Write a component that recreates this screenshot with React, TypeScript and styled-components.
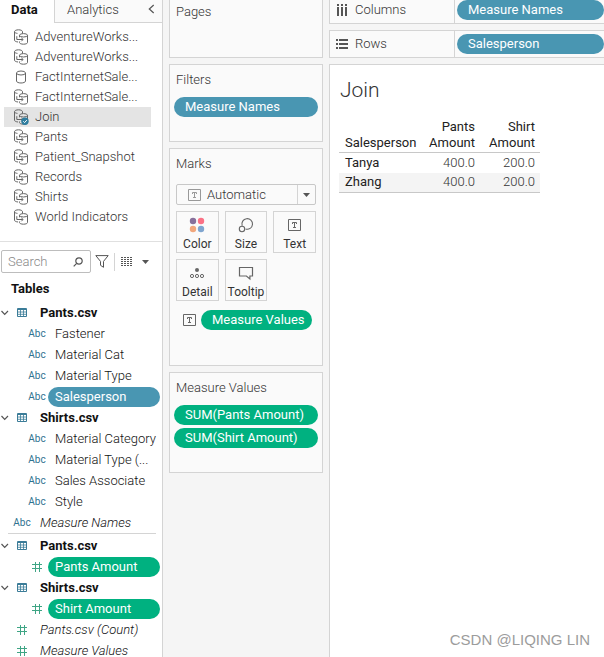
import React from 'react';
import styled, { createGlobalStyle, css } from 'styled-components';

const BLUE = '#4996b2';
const GREEN = '#00b180';
const LINE = '#d4d4d4';

const GlobalStyle = createGlobalStyle`
  *, *::before, *::after { box-sizing: border-box; }
  body {
    margin: 0;
    background: #f5f5f5;
    color: #333;
    font: 300 13px/20px Roboto, "Liberation Sans", sans-serif;
  }
  button, input { font: inherit; color: inherit; }
  button { border: 0; padding: 0; background: none; text-align: left; cursor: pointer; }
  svg { display: block; flex: none; }
  ul { list-style: none; margin: 0; padding: 0; }
  h1, h2 { margin: 0; font-weight: 300; }
`;

const Page = styled.div`
  display: grid;
  grid-template-columns: 163px 154px minmax(0, 1fr);
  column-gap: 6px;
  height: 100vh;
  overflow: hidden;
`;

/* ---------- data pane ---------- */

const DataPane = styled.aside`
  background: #fff;
  border-right: 1px solid ${LINE};
  overflow: hidden;
`;

const TabBar = styled.div`
  display: flex;
  height: 23px;
`;

const Tab = styled.button<{ $active?: boolean }>`
  padding-bottom: 3px;
  ${p => p.$active
    ? css`width: 54px; padding-left: 11px; font-weight: 700; color: #111;`
    : css`flex: 1; padding-left: 12px; background: #fafafa; border-left: 1px solid ${LINE}; border-bottom: 1px solid ${LINE};`}
`;

const Collapse = styled.button`
  width: 20px;
  padding: 0 0 4px 6px;
  background: #fafafa;
  border-bottom: 1px solid ${LINE};
`;

const SourceList = styled.ul`
  padding: 4px 11px 14px 4px;
  border-bottom: 1px solid #e0e0e0;
`;

const Source = styled.button<{ $selected?: boolean }>`
  display: flex;
  align-items: center;
  gap: 6px;
  width: 100%;
  height: 20px;
  padding-left: 9px;
  white-space: nowrap;
  background: ${p => (p.$selected ? '#e4e4e4' : 'transparent')};
`;

const SearchRow = styled.div`
  display: flex;
  align-items: center;
  padding: 8px 0 0 1px;
`;

const SearchBox = styled.label`
  display: flex;
  align-items: center;
  width: 90px;
  height: 23px;
  padding: 0 7px 0 6px;
  border: 1px solid #bdbdbd;
  border-radius: 2px;
`;

const SearchInput = styled.input`
  flex: 1;
  min-width: 0;
  padding: 0;
  border: 0;
  outline: 0;
  background: none;
  &::placeholder { color: #888; opacity: 1; }
`;

const FilterButton = styled.button`
  padding: 0 5px 0 4px;
`;

const ViewButton = styled.button`
  display: flex;
  align-items: center;
  gap: 9px;
  height: 18px;
  padding-left: 6px;
  border-left: 1px solid ${LINE};
`;

const TablesTitle = styled.h2`
  padding: 6px 0 3px 11px;
  font-size: 13px;
  font-weight: 700;
  color: #111;
`;

const Tree = styled.ul`
  padding: 0 2px 0 0;
`;

const TableRow = styled.button`
  display: flex;
  align-items: center;
  height: 21px;
  width: 100%;
  font-weight: 700;
  color: #111;
  & > svg:first-child { margin-right: 8px; }
  & > svg:nth-child(2) { margin-right: 13px; }
`;

const FieldRow = styled.li<{ $outer?: boolean }>`
  display: flex;
  align-items: center;
  height: 21px;
  padding-left: ${p => (p.$outer ? 12 : 27)}px;
  color: #111;
`;

const TypeMark = styled.span`
  display: flex;
  justify-content: center;
  width: 20px;
  font-size: 10px;
  font-weight: 400;
  color: #2f7290;
`;

const FieldName = styled.button<{ $italic?: boolean }>`
  margin-left: 8px;
  white-space: nowrap;
  font-style: ${p => (p.$italic ? 'italic' : 'normal')};
`;

const Divider = styled.li`
  height: 1px;
  margin: 0 4px 1px 8px;
  background: ${LINE};
`;

const Pill = styled.button<{ $color: string; $pad?: number }>`
  display: block;
  flex: 1;
  width: 100%;
  height: 20px;
  padding-left: ${p => p.$pad ?? 11}px;
  border-radius: 10px;
  background: ${p => p.$color};
  color: #fff;
  font-weight: 400;
  white-space: nowrap;
`;

/* ---------- cards ---------- */

const Cards = styled.section`
  display: flex;
  flex-direction: column;
  gap: 6px;
`;

const Card = styled.div<{ $min: number; $first?: boolean }>`
  min-height: ${p => p.$min}px;
  padding: ${p => (p.$first ? 2 : 5)}px 4px 8px;
  background: #fafafa;
  border: 1px solid ${LINE};
  ${p => p.$first && css`border-top: 0;`}
`;

const CardTitle = styled.h2`
  padding-left: 2px;
  font-size: 13px;
`;

const PillStack = styled.div`
  display: grid;
  gap: 3px;
  margin-top: 7px;
`;

const MarkType = styled.button`
  display: flex;
  align-items: center;
  width: 140px;
  height: 21px;
  margin: 10px 0 6px 2px;
  padding-left: 11px;
  gap: 6px;
  border: 1px solid #c8c8c8;
  border-radius: 2px;
`;

const Caret = styled.span`
  display: flex;
  align-items: center;
  justify-content: center;
  width: 18px;
  height: 100%;
  margin-left: auto;
  border-left: 1px solid ${LINE};
`;

const MarkGrid = styled.div`
  display: grid;
  grid-template-columns: repeat(3, 1fr);
  gap: 6px;
  width: 140px;
  margin-left: 2px;
`;

const MarkButton = styled.button`
  display: flex;
  flex-direction: column;
  align-items: center;
  justify-content: space-between;
  height: 42px;
  padding-top: 5px;
  border: 1px solid ${LINE};
  font-size: 12px;
  font-weight: 400;
  line-height: 16px;
`;

const MarkEncoding = styled.div`
  display: flex;
  align-items: center;
  gap: 5px;
  margin-top: 9px;
  padding: 0 6px 0 9px;
`;

/* ---------- shelves and view ---------- */

const Workspace = styled.main`
  display: flex;
  flex-direction: column;
  gap: 6px;
  min-width: 0;
`;

const Shelf = styled.div<{ $first?: boolean }>`
  display: flex;
  align-items: center;
  height: ${p => (p.$first ? 24 : 28)}px;
  padding-bottom: ${p => (p.$first ? 3 : 0)}px;
  background: #fafafa;
  border: solid ${LINE};
  border-width: ${p => (p.$first ? 0 : 1)}px 0 1px 1px;
`;

const ShelfLabel = styled.div`
  display: flex;
  align-items: center;
  gap: 7px;
  flex: 0 0 125px;
  height: 28px;
  margin-right: 2px;
  padding-left: 6px;
  border-right: 1px solid ${LINE};
`;

const View = styled.div`
  position: relative;
  flex: 1;
  padding: 12px 10px;
  background: #fff;
  border: solid ${LINE};
  border-width: 1px 0 0 1px;
`;

const ViewTitle = styled.h1`
  font-size: 21px;
  line-height: 26px;
  font-weight: 300;
`;

const CrossTab = styled.table`
  margin-top: 16px;
  margin-left: -1px;
  border-collapse: collapse;
  table-layout: fixed;
  width: 201px;
  line-height: 16px;
  th, td { height: 20px; padding: 0 5px; text-align: right; }
  th { font-weight: 400; color: #222; }
  th:first-child { width: 81px; padding-left: 6px; padding-right: 0; text-align: left; }
  thead th { vertical-align: bottom; border-bottom: 1px solid #c8c8c8; padding-bottom: 1px; }
  tbody tr:nth-child(even) { background: #f4f4f4; }
  tbody tr:last-child { border-bottom: 1px solid #c8c8c8; }
`;

const Watermark = styled.footer`
  position: absolute;
  right: 14px;
  bottom: 6px;
  font: 15px/22px "Liberation Sans", sans-serif;
  color: #9c9c9c;
`;

/* ---------- icons ---------- */

const DataSourceIcon = ({ checked }: { checked?: boolean }) => (
  <svg width="16" height="16" viewBox="0 0 16 16" fill="none" stroke="#666">
    <path d="M1.500 3v8.200c0 1 1.600 1.600 3.600 1.800" />
    <path d="M9.500 4.500V2.700C9.500 1.600 7.700.8 5.500.8S1.500 1.600 1.500 2.700c0 .8 1.200 1.500 3 1.700" />
    <ellipse cx="10.500" cy="6.300" rx="4" ry="1.700" />
    <path d="M6.500 6.300v2M14.500 6.300v7.200c0 1-1.800 1.700-4 1.700s-4-.7-4-1.700v-1M3.800 7.200v3.300h6M8.300 8.800l1.800 1.700-1.800 1.800" />
    {checked && (
      <>
        <circle cx="12" cy="12.300" r="3.700" fill="#2e7d9f" stroke="none" />
        <path d="m10.300 12.300 1.300 1.300 2.200-2.500" stroke="#fff" />
      </>
    )}
  </svg>
);

const CylinderIcon = () => (
  <svg width="16" height="16" viewBox="0 0 16 16" fill="none" stroke="#666">
    <ellipse cx="8" cy="4" rx="4.500" ry="2" />
    <path d="M3.500 4v8c0 1.200 2 2 4.500 2s4.500-.8 4.500-2V4" />
  </svg>
);

const SearchIcon = () => (
  <svg width="10" height="10" viewBox="0 0 10 10" fill="none" stroke="#555" strokeWidth="1.200">
    <circle cx="6" cy="4" r="3.200" />
    <path d="M3.700 6.300.7 9.300" />
  </svg>
);

const FunnelIcon = () => (
  <svg width="14" height="13" viewBox="0 0 14 13" fill="none" stroke="#555">
    <path d="M.8.6h12.400L8.500 6.400v5.900l-3-2V6.400z" />
  </svg>
);

const ListIcon = () => (
  <svg width="12" height="9" viewBox="0 0 12 9" stroke="#555" strokeDasharray="2 1">
    <path d="M0 .5h12M0 2.500h12M0 4.500h12M0 6.500h12M0 8.500h12" />
  </svg>
);

const TriangleIcon = () => (
  <svg width="7" height="4" viewBox="0 0 7 4" fill="#555">
    <path d="M0 0h7L3.500 4z" />
  </svg>
);

const ChevronDown = () => (
  <svg width="9" height="6" viewBox="0 0 9 6" fill="none" stroke="#555" strokeWidth="1.200">
    <path d="m1.500 1 3.200 3.300L8 1" />
  </svg>
);

const ChevronLeft = () => (
  <svg width="7" height="10" viewBox="0 0 7 10" fill="none" stroke="#555" strokeWidth="1.200">
    <path d="M5.700 1 1.300 5l4.400 4" />
  </svg>
);

const TableIcon = () => (
  <svg width="10" height="9" viewBox="0 0 10 9" fill="none" stroke="#3b7c98">
    <path d="M.5.500h9v8h-9zM0 1.500h10" />
    <path d="M0 4h10M0 6.300h10M3.500 1v8M6.500 1v8" strokeWidth=".8" />
  </svg>
);

const HashIcon = () => (
  <svg width="10" height="10" viewBox="0 0 10 10" fill="none" stroke="#3fa585">
    <path d="M3.500 0v10M7.500 0v10M0 2.500h10M0 6.500h10" />
  </svg>
);

const TextIcon = ({ color = '#666' }: { color?: string }) => (
  <svg width="13" height="12" viewBox="0 0 13 12" fill="none" stroke={color}>
    <path d="M.5.500h12v11H.5z" />
    <path d="M4.500 5V3.500h4V5M6.500 3.500v5M5 8.500h3" />
  </svg>
);

const ColorIcon = () => (
  <svg width="16" height="16" viewBox="0 0 16 16">
    <circle cx="4" cy="4" r="3.200" fill="#87709b" />
    <circle cx="12" cy="4" r="3.200" fill="#fb7185" />
    <circle cx="4" cy="12" r="3.200" fill="#f2a77c" />
    <circle cx="12" cy="12" r="3.200" fill="#7fa5cf" />
  </svg>
);

const SizeIcon = () => (
  <svg width="16" height="16" viewBox="0 0 16 16" fill="none" stroke="#666" strokeWidth="1.100">
    <path d="M4.200 8.700A5.300 5.300 0 1 1 7.600 12" />
    <circle cx="4" cy="12" r="2.700" />
  </svg>
);

const TextMarkIcon = () => (
  <svg width="14" height="16" viewBox="0 0 14 16" fill="none" stroke="#666">
    <path d="M.5 2.500h12v11H.5z" />
    <path d="M4.500 7V5.500h4V7M6.500 5.500v5M5 10.500h3" />
  </svg>
);

const DetailIcon = () => (
  <svg width="16" height="16" viewBox="0 0 16 16" fill="none" stroke="#666">
    <circle cx="8" cy="5" r="2" fill="#666" stroke="none" />
    <circle cx="3" cy="11" r="1.600" />
    <circle cx="8" cy="11" r="1.600" />
    <circle cx="13" cy="11" r="1.600" />
  </svg>
);

const TooltipIcon = () => (
  <svg width="16" height="16" viewBox="0 0 16 16" fill="none" stroke="#666" strokeWidth="1.200">
    <path d="M1.500 2.500h13v8.500h-2.600v3l-3.500-3H1.500z" />
  </svg>
);

const ColumnsIcon = () => (
  <svg width="12" height="12" viewBox="0 0 12 12" fill="#555">
    <path d="M1 0h2v2H1zM5 0h2v2H5zM9 0h2v2H9zM1 3h2v9H1zM5 3h2v9H5zM9 3h2v9H9z" />
  </svg>
);

const RowsIcon = () => (
  <svg width="12" height="12" viewBox="0 0 12 12" fill="#555">
    <path d="M0 1h2v2H0zM0 5h2v2H0zM0 9h2v2H0zM3 1h9v2H3zM3 5h9v2H3zM3 9h9v2H3z" />
  </svg>
);

/* ---------- content ---------- */

const sources = [
  'AdventureWorks...', 'AdventureWorks...', 'FactInternetSale...', 'FactInternetSale...', 'Join',
  'Pants', 'Patient_Snapshot', 'Records', 'Shirts', 'World Indicators',
];

const TableHead = ({ name }: { name: string }) => (
  <li><TableRow aria-expanded="true"><ChevronDown /><TableIcon />{name}</TableRow></li>
);

const PillSlot = styled.span`
  flex: 1;
  margin-left: 1px;
`;

type FieldProps = { name: string; pill?: string; number?: boolean; outer?: boolean };

const Field = ({ name, pill, number, outer }: FieldProps) => (
  <FieldRow $outer={outer}>
    <TypeMark>{number ? <HashIcon /> : 'Abc'}</TypeMark>
    {pill
      ? <PillSlot><Pill $color={pill} $pad={7}>{name}</Pill></PillSlot>
      : <FieldName $italic={outer}>{name}</FieldName>}
  </FieldRow>
);

const marks = [
  ['Color', ColorIcon], ['Size', SizeIcon], ['Text', TextMarkIcon], ['Detail', DetailIcon], ['Tooltip', TooltipIcon],
] as const;

export default function App() {
  return (
    <>
      <GlobalStyle />
      <Page>
        <DataPane>
          <TabBar>
            <Tab $active>Data</Tab>
            <Tab>Analytics</Tab>
            <Collapse aria-label="Collapse pane"><ChevronLeft /></Collapse>
          </TabBar>
          <SourceList>
            {sources.map((name, i) => (
              <li key={i}>
                <Source $selected={name === 'Join'}>
                  {i === 2 ? <CylinderIcon /> : <DataSourceIcon checked={name === 'Join'} />}
                  {name}
                </Source>
              </li>
            ))}
          </SourceList>
          <SearchRow>
            <SearchBox>
              <SearchInput type="text" placeholder="Search" aria-label="Search" />
              <SearchIcon />
            </SearchBox>
            <FilterButton aria-label="Filter fields"><FunnelIcon /></FilterButton>
            <ViewButton aria-label="View options"><ListIcon /><TriangleIcon /></ViewButton>
          </SearchRow>
          <TablesTitle>Tables</TablesTitle>
          <Tree>
            <TableHead name="Pants.csv" />
            <Field name="Fastener" />
            <Field name="Material Cat" />
            <Field name="Material Type" />
            <Field name="Salesperson" pill={BLUE} />
            <TableHead name="Shirts.csv" />
            <Field name="Material Category" />
            <Field name="Material Type (..." />
            <Field name="Sales Associate" />
            <Field name="Style" />
            <Field name="Measure Names" outer />
            <Divider />
            <TableHead name="Pants.csv" />
            <Field name="Pants Amount" number pill={GREEN} />
            <TableHead name="Shirts.csv" />
            <Field name="Shirt Amount" number pill={GREEN} />
            <Field name="Pants.csv (Count)" number outer />
            <Field name="Measure Values" number outer />
          </Tree>
        </DataPane>

        <Cards>
          <Card $min={58} $first><CardTitle>Pages</CardTitle></Card>
          <Card $min={78}>
            <CardTitle>Filters</CardTitle>
            <PillStack><Pill $color={BLUE}>Measure Names</Pill></PillStack>
          </Card>
          <Card $min={218}>
            <CardTitle>Marks</CardTitle>
            <MarkType aria-haspopup="listbox">
              <TextIcon color="#999" />Automatic<Caret><TriangleIcon /></Caret>
            </MarkType>
            <MarkGrid>
              {marks.map(([name, Icon]) => <MarkButton key={name}><Icon />{name}</MarkButton>)}
            </MarkGrid>
            <MarkEncoding><TextIcon /><Pill $color={GREEN}>Measure Values</Pill></MarkEncoding>
          </Card>
          <Card $min={101}>
            <CardTitle>Measure Values</CardTitle>
            <PillStack>
              <Pill $color={GREEN}>SUM(Pants Amount)</Pill>
              <Pill $color={GREEN}>SUM(Shirt Amount)</Pill>
            </PillStack>
          </Card>
        </Cards>

        <Workspace>
          <Shelf $first>
            <ShelfLabel><ColumnsIcon />Columns</ShelfLabel>
            <Pill $color={BLUE}>Measure Names</Pill>
          </Shelf>
          <Shelf>
            <ShelfLabel><RowsIcon />Rows</ShelfLabel>
            <Pill $color={BLUE}>Salesperson</Pill>
          </Shelf>
          <View>
            <ViewTitle>Join</ViewTitle>
            <CrossTab>
              <thead>
                <tr><th scope="col">Salesperson</th><th scope="col">Pants Amount</th><th scope="col">Shirt Amount</th></tr>
              </thead>
              <tbody>
                <tr><th scope="row">Tanya</th><td>400.0</td><td>200.0</td></tr>
                <tr><th scope="row">Zhang</th><td>400.0</td><td>200.0</td></tr>
              </tbody>
            </CrossTab>
            <Watermark>CSDN @LIQING LIN</Watermark>
          </View>
        </Workspace>
      </Page>
    </>
  );
}
